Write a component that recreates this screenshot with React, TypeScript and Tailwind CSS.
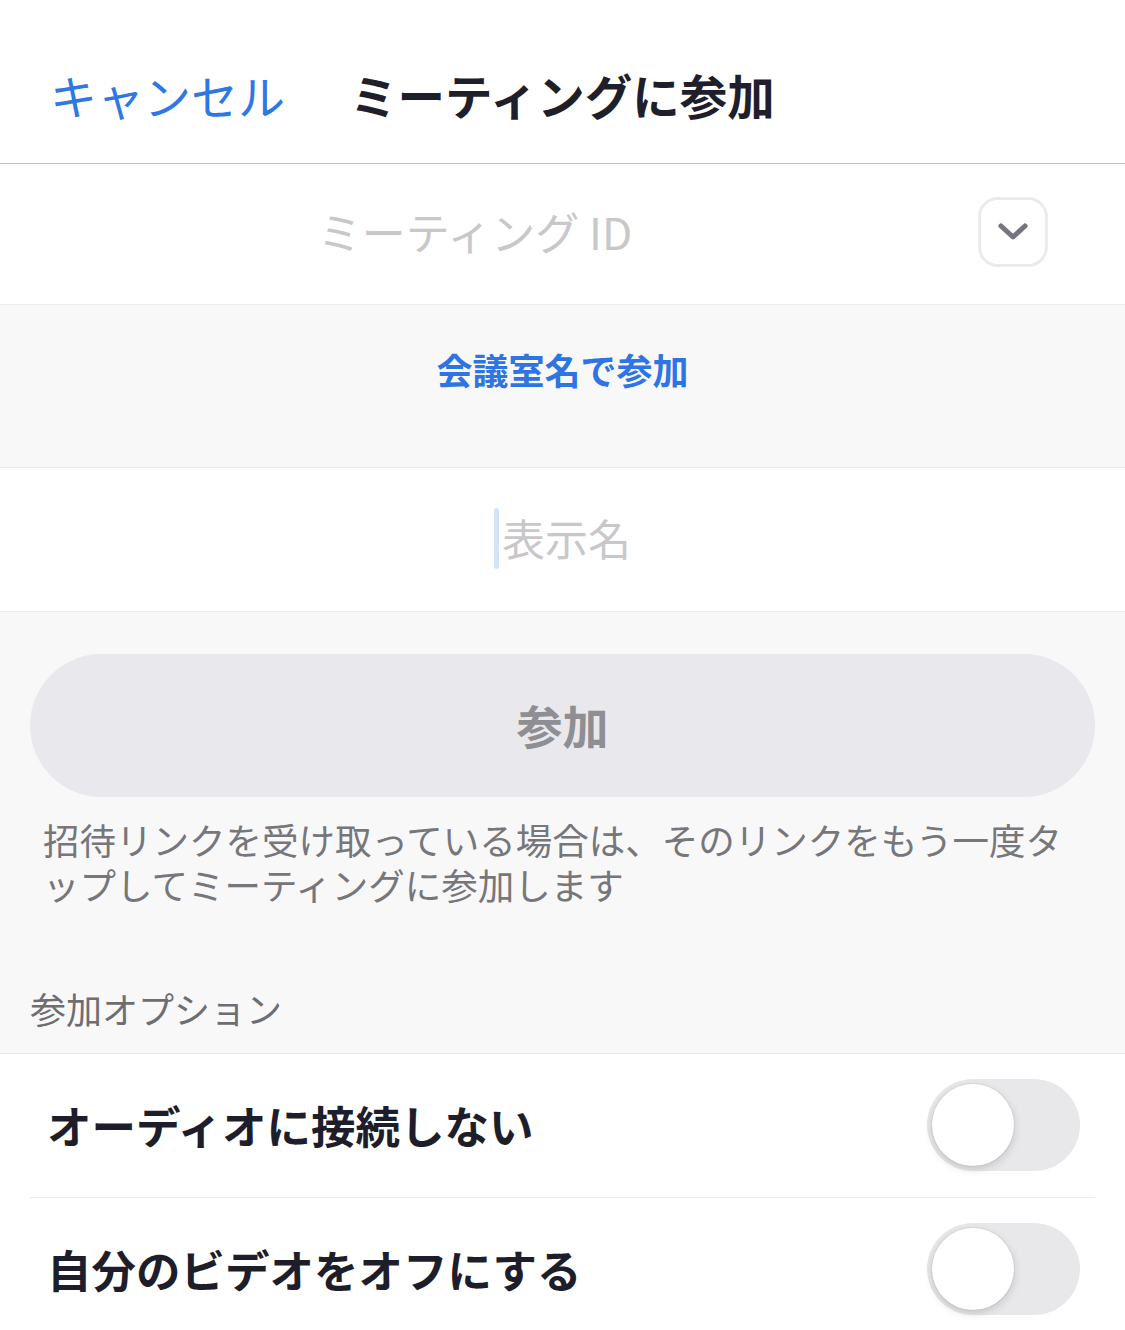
import React from "react";

function Toggle() {
  return (
    <div className="w-[153px] h-[92px] rounded-full bg-[#e8e8ea] flex items-center px-[5px] shrink-0">
      <div className="w-[82px] h-[82px] rounded-full bg-white shadow-[0_3px_8px_rgba(0,0,0,0.16),0_0_0_1px_rgba(0,0,0,0.04)]" />
    </div>
  );
}

export default function App() {
  return (
    <div
      className="min-h-screen bg-white"
      style={{ fontFamily: "'Noto Sans CJK JP', 'Noto Sans', sans-serif" }}
    >
      {/* Header */}
      <div className="h-[164px] pt-[26px] flex items-center border-b border-[#bdbdc0]">
        <span className="ml-[50px] text-[47px] leading-none text-[#2f77e3]">キャンセル</span>
        <span className="ml-[65px] text-[47.5px] leading-none font-bold text-[#1f1f2b]">ミーティングに参加</span>
      </div>

      {/* Meeting ID */}
      <div className="h-[141px] pb-[5px] flex items-center border-b border-[#ececee]">
        <div className="flex-1 pb-[2px] text-center text-[44px] leading-none text-[#c8c8ca]">ミーティング ID</div>
        <div className="ml-[28px] mr-[77px] w-[70px] h-[70px] rounded-[20px] border-[3px] border-[#ebeaf0] flex items-center justify-center">
          <svg width="30" height="18" viewBox="0 0 30 18" fill="none">
            <path d="M3 3 L15 14 L27 3" stroke="#76747f" strokeWidth="5" strokeLinecap="round" strokeLinejoin="round" />
          </svg>
        </div>
      </div>

      {/* Join by room name */}
      <div className="h-[163px] bg-[#f8f8f9] border-b border-[#ececee] pt-[40px] flex justify-center">
        <span className="text-[36px] leading-[48px] font-bold text-[#2f74e3]">会議室名で参加</span>
      </div>

      {/* Display name */}
      <div className="h-[144px] pb-[5px] flex items-center justify-center border-b border-[#ececee]">
        <div className="w-[5px] h-[61px] rounded-full bg-[#d3e4fa] mr-[3px] mt-[2px]" />
        <span className="text-[43px] leading-none text-[#c8c8ca]">表示名</span>
      </div>

      {/* Gray section */}
      <div className="bg-[#f8f8f9] pt-[42px] pb-[22px] border-b border-[#e8e8ee]">
        <div className="mx-[30px] h-[143px] pb-[4px] rounded-full bg-[#e8e8ed] flex items-center justify-center">
          <span className="text-[46px] leading-none font-bold text-[#8e8e93]">参加</span>
        </div>
        <p className="mt-[20px] px-[43px] text-[36.5px] leading-[45px] text-[#76767b]">
          招待リンクを受け取っている場合は、そのリンクをもう一度タ
          <br />
          ップしてミーティングに参加します
        </p>
        <div className="mt-[79px] px-[30px] text-[36px] leading-[45px] text-[#6d6d72]">参加オプション</div>
      </div>

      {/* Options */}
      <div className="h-[143px] pb-[1px] flex items-center justify-between pl-[47px] pr-[45px]">
        <span className="text-[44.5px] leading-none font-bold text-[#1e1e2a]">オーディオに接続しない</span>
        <Toggle />
      </div>
      <div className="mx-[30px] border-t border-[#ececee]" />
      <div className="h-[143px] pb-[1px] flex items-center justify-between pl-[47px] pr-[45px]">
        <span className="text-[44.5px] leading-none font-bold text-[#1e1e2a]">自分のビデオをオフにする</span>
        <Toggle />
      </div>
    </div>
  );
}
